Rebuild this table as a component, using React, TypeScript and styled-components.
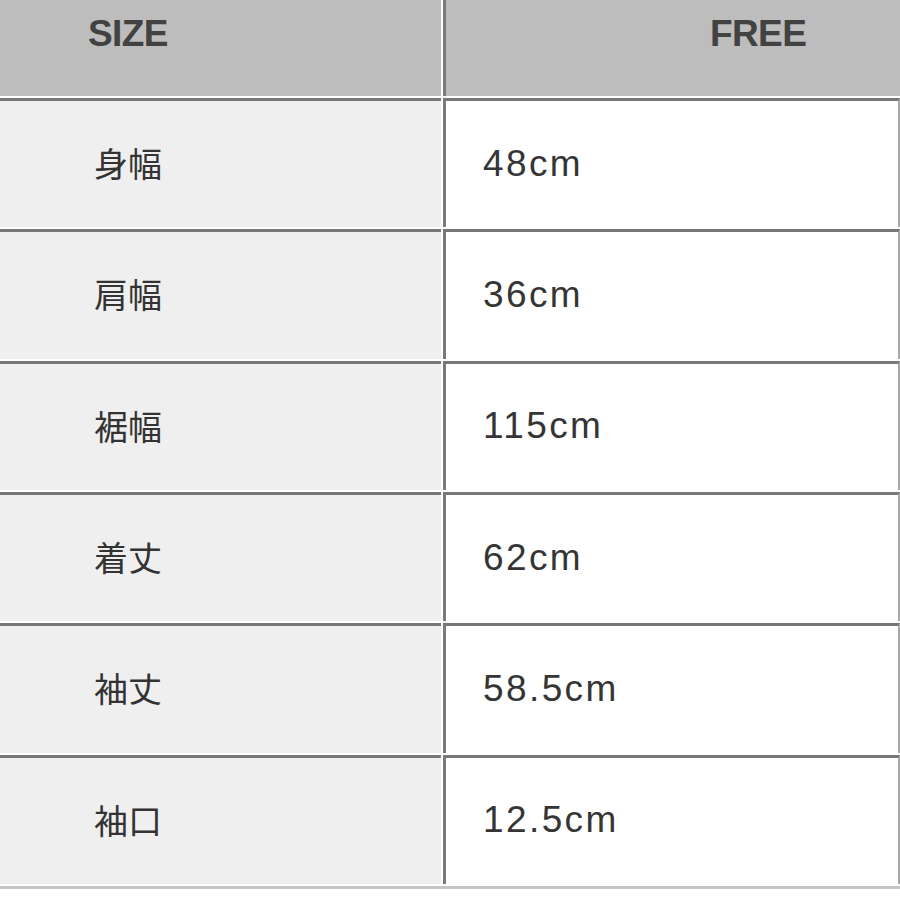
import React from "react";
import styled, { createGlobalStyle } from "styled-components";

const GlobalStyle = createGlobalStyle`
  html, body {
    margin: 0;
    padding: 0;
    background: #ffffff;
  }
  body {
    font-family: "Liberation Sans", "Noto Sans CJK JP", sans-serif;
  }
`;

const Page = styled.div`
  width: 900px;
  height: 900px;
  overflow: hidden;
  background: #ffffff;
`;

const Table = styled.div`
  display: grid;
  grid-template-columns: 441px 1fr;
  grid-template-rows: 96px repeat(6, 129.33px);
  column-gap: 2px;
  row-gap: 2px;
  border-bottom: 3px solid #c6c6c6;
  padding-bottom: 2px;
`;

const HeadCell = styled.div<{ $right?: boolean }>`
  background: #bdbdbd;
  color: #424242;
  font-family: "Liberation Sans", Arial, sans-serif;
  font-weight: 700;
  font-size: 37px;
  line-height: 42px;
  letter-spacing: -0.6px;
  padding-top: 13px;
  padding-left: ${(p) => (p.$right ? "264px" : "88px")};
  border-left: ${(p) => (p.$right ? "3px solid #7a7a7a" : "none")};
  box-sizing: border-box;
`;

const LabelCell = styled.div`
  background: #efefef;
  border-top: 3px solid #777777;
  box-sizing: border-box;
  display: flex;
  align-items: center;
  padding-left: 94px;
  padding-bottom: 2px;
  color: #333333;
  font-family: "Noto Sans CJK JP", "Liberation Sans", sans-serif;
  font-size: 34px;
  line-height: 1;
`;

const ValueCell = styled.div`
  background: #ffffff;
  border-top: 3px solid #777777;
  border-left: 3px solid #7a7a7a;
  border-right: 2px solid #a8a8a8;
  box-sizing: border-box;
  display: flex;
  align-items: center;
  padding-left: 37px;
  padding-bottom: 2px;
  color: #353535;
  font-family: "Liberation Sans", Arial, sans-serif;
  font-size: 37px;
  letter-spacing: 2.4px;
  line-height: 1;
`;

const rows: [string, string][] = [
  ["身幅", "48cm"],
  ["肩幅", "36cm"],
  ["裾幅", "115cm"],
  ["着丈", "62cm"],
  ["袖丈", "58.5cm"],
  ["袖口", "12.5cm"],
];

export default function App() {
  return (
    <Page>
      <GlobalStyle />
      <Table>
        <HeadCell>SIZE</HeadCell>
        <HeadCell $right>FREE</HeadCell>
        {rows.map(([label, value]) => (
          <React.Fragment key={label}>
            <LabelCell>{label}</LabelCell>
            <ValueCell>{value}</ValueCell>
          </React.Fragment>
        ))}
      </Table>
    </Page>
  );
}
